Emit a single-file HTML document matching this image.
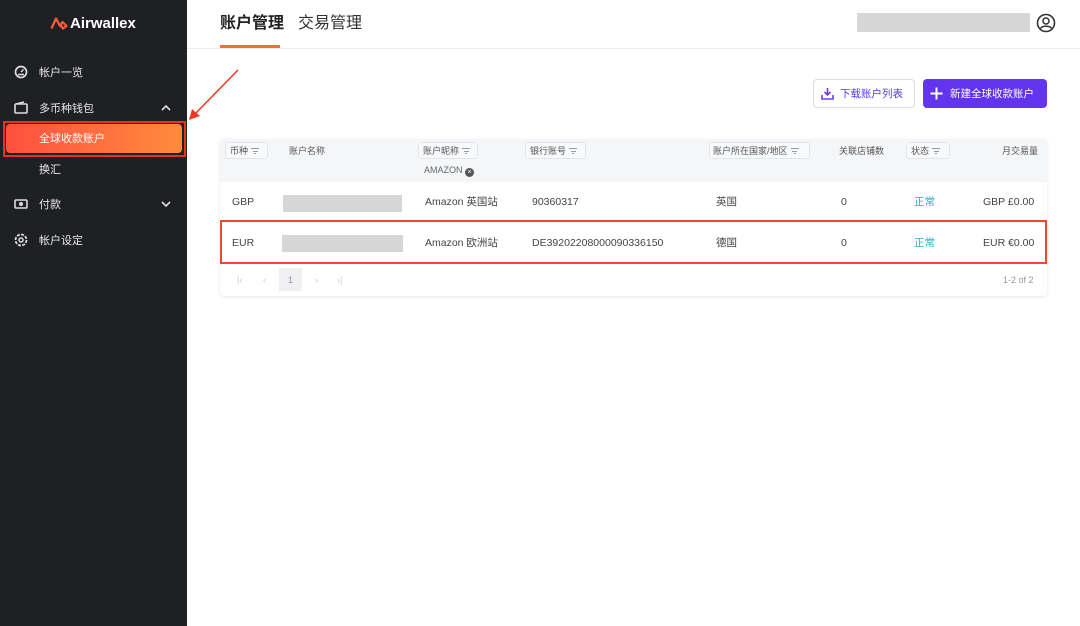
<!DOCTYPE html>
<html><head><meta charset="utf-8"><style>
*{margin:0;padding:0;box-sizing:border-box}
body{width:1080px;height:626px;overflow:hidden;background:#fff;font-family:"Liberation Sans","Noto Sans CJK SC",sans-serif;position:relative;color:#333}
.side{position:absolute;left:0;top:0;width:187px;height:626px;background:#1f2024;color:#ddd;font-size:11px}
.abs{position:absolute}
.nav{position:absolute;left:39px;font-size:11px;color:#e6e6e6;line-height:14px}
.ic{position:absolute;left:14px;width:14px;height:14px}
.th{position:absolute;top:145px;font-size:9px;color:#555;line-height:12px}
.chip{position:absolute;top:142px;height:17px;border:1px solid #e3e5ea;border-radius:3px;background:#f8f9fb}
.td{position:absolute;font-size:10.5px;color:#444;line-height:14px}
.grey{position:absolute;background:#d6d6d6;height:17px}
.f{display:inline-block;width:8px;height:6px;vertical-align:0;margin-left:3px;background:linear-gradient(#999,#999) 0 0/8px 1px no-repeat,linear-gradient(#999,#999) 1.5px 2.5px/5px 1px no-repeat,linear-gradient(#999,#999) 3px 5px/2px 1px no-repeat}
</style></head><body>
<div class="side">
  <svg class="abs" style="left:50px;top:16px" width="19" height="14" viewBox="0 0 19 14"><path d="M1.5 12.5 L6 2.5 L10 10 L12.5 6 L16.5 10 L13 12.5 L10.5 9" fill="none" stroke="#ff5a3c" stroke-width="2.2" stroke-linejoin="round"/></svg>
  <div class="abs" style="left:70px;top:15px;font-size:15px;font-weight:bold;color:#fff;line-height:18px">Airwallex</div>
  <svg class="ic" style="top:65px" viewBox="0 0 14 14"><circle cx="7" cy="7" r="5.5" fill="none" stroke="#ddd" stroke-width="1.7"/><path d="M7 7 L9.5 4.5 M4 9.5 h6" stroke="#ddd" stroke-width="1.5"/></svg>
  <div class="nav" style="top:66px">帐户一览</div>
  <svg class="ic" style="top:101px" viewBox="0 0 14 14"><rect x="1" y="3" width="12" height="9" rx="1" fill="none" stroke="#ddd" stroke-width="1.6"/><path d="M2 3 L10 1" stroke="#ddd" stroke-width="1.5"/></svg>
  <div class="nav" style="top:102px">多币种钱包</div>
  <svg class="abs" style="left:161px;top:104px" width="10" height="8" viewBox="0 0 10 8"><path d="M1 6 L5 2 L9 6" fill="none" stroke="#ddd" stroke-width="1.6"/></svg>
  <div class="abs" style="left:3px;top:121px;width:183px;height:36px;border:2px solid #e8321e"></div>
  <div class="abs" style="left:6px;top:124px;width:176px;height:29px;border-radius:4px;background:linear-gradient(90deg,#ff5040,#ff8a3c)"></div>
  <div class="nav" style="top:132px;color:#fff">全球收款账户</div>
  <div class="nav" style="top:163px">换汇</div>
  <svg class="ic" style="top:197px" viewBox="0 0 14 14"><rect x="1" y="3" width="12" height="8" rx="1" fill="none" stroke="#ddd" stroke-width="1.6"/><circle cx="7" cy="7" r="2" fill="#ddd"/></svg>
  <div class="nav" style="top:198px">付款</div>
  <svg class="abs" style="left:161px;top:200px" width="10" height="8" viewBox="0 0 10 8"><path d="M1 2 L5 6 L9 2" fill="none" stroke="#ddd" stroke-width="1.6"/></svg>
  <svg class="ic" style="top:233px" viewBox="0 0 14 14"><circle cx="7" cy="7" r="5.5" fill="none" stroke="#ddd" stroke-width="1.8" stroke-dasharray="3 1.3"/><circle cx="7" cy="7" r="2" fill="none" stroke="#ddd" stroke-width="1.5"/></svg>
  <div class="nav" style="top:234px">帐户设定</div>
</div>
<svg class="abs" style="left:185px;top:66px" width="60" height="60" viewBox="0 0 60 60"><path d="M53 4 L8 50" stroke="#ee3a24" stroke-width="1.6"/><path d="M4 54 L7 43 L15 50 Z" fill="#ee3a24"/></svg>
<div class="abs" style="left:187px;top:48px;width:893px;height:1px;background:#ececec"></div>
<div class="abs" style="left:220px;top:13px;font-size:16px;font-weight:bold;color:#222;line-height:22px">账户管理</div>
<div class="abs" style="left:220px;top:45px;width:60px;height:3px;background:#ff6a3c"></div>
<div class="abs" style="left:298px;top:13px;font-size:16px;color:#333;line-height:22px">交易管理</div>
<div class="abs" style="left:857px;top:13px;width:173px;height:19px;background:#d6d6d6"></div>
<svg class="abs" style="left:1036px;top:13px" width="20" height="20" viewBox="0 0 20 20"><circle cx="10" cy="10" r="8.5" fill="none" stroke="#333" stroke-width="1.6"/><circle cx="10" cy="8" r="3" fill="none" stroke="#333" stroke-width="1.5"/><path d="M4.5 15.5 C6 12.5 14 12.5 15.5 15.5" fill="none" stroke="#333" stroke-width="1.5"/></svg>
<div class="abs" style="left:813px;top:79px;width:102px;height:29px;border:1px solid #dcdce2;border-radius:4px"></div>
<svg class="abs" style="left:821px;top:87px" width="13" height="13" viewBox="0 0 13 13"><path d="M6.5 1 V8 M3.5 5 L6.5 8 L9.5 5 M1 8 V12 H12 V8" fill="none" stroke="#6b3cf5" stroke-width="1.6"/></svg>
<div class="abs" style="left:840px;top:87px;font-size:10.5px;color:#5a3ae6;line-height:14px">下载账户列表</div>
<div class="abs" style="left:923px;top:79px;width:124px;height:29px;border-radius:4px;background:#6234f0"></div>
<svg class="abs" style="left:930px;top:87px" width="13" height="13" viewBox="0 0 13 13"><path d="M6.5 0.5 V12.5 M0.5 6.5 H12.5" stroke="#fff" stroke-width="2"/></svg>
<div class="abs" style="left:950px;top:87px;font-size:10.5px;color:#fff;line-height:14px">新建全球收款账户</div>
<div class="abs" style="left:220px;top:139px;width:827px;height:157px;border-radius:4px;box-shadow:0 1px 3px rgba(0,0,0,.1);background:#fff"></div>
<div class="abs" style="left:220px;top:139px;width:827px;height:43px;background:#f5f6f8;border-radius:4px 4px 0 0"></div>
<div class="chip" style="left:225px;width:43px"></div>
<div class="chip" style="left:418px;width:60px"></div>
<div class="chip" style="left:525px;width:61px"></div>
<div class="chip" style="left:709px;width:101px"></div>
<div class="chip" style="left:906px;width:44px"></div>
<div class="th" style="left:230px">币种<span class="f"></span></div>
<div class="th" style="left:289px">账户名称</div>
<div class="th" style="left:423px">账户昵称<span class="f"></span></div>
<div class="th" style="left:424px;top:164px;color:#666">AMAZON <span style="display:inline-block;width:9px;height:9px;border-radius:50%;background:#555;color:#fff;font-size:7px;text-align:center;line-height:9px;vertical-align:-1px">×</span></div>
<div class="th" style="left:530px">银行账号<span class="f"></span></div>
<div class="th" style="left:713px">账户所在国家/地区<span class="f"></span></div>
<div class="th" style="left:839px">关联店铺数</div>
<div class="th" style="left:911px">状态<span class="f"></span></div>
<div class="th" style="left:1002px">月交易量</div>
<div class="abs" style="left:220px;top:222px;width:827px;height:1px;background:#eee"></div>
<div class="td" style="left:232px;top:195px">GBP</div>
<div class="grey" style="left:283px;top:195px;width:119px"></div>
<div class="td" style="left:425px;top:195px">Amazon 英国站</div>
<div class="td" style="left:532px;top:195px">90360317</div>
<div class="td" style="left:716px;top:195px">英国</div>
<div class="td" style="left:841px;top:195px">0</div>
<div class="td" style="left:914px;top:195px;color:#2ab0c5">正常</div>
<div class="td" style="left:983px;top:195px">GBP £0.00</div>
<div class="abs" style="left:220px;top:220px;width:827px;height:44px;border:2px solid #ee4a30"></div>
<div class="td" style="left:232px;top:236px">EUR</div>
<div class="grey" style="left:282px;top:235px;width:121px"></div>
<div class="td" style="left:425px;top:236px">Amazon 欧洲站</div>
<div class="td" style="left:532px;top:236px">DE39202208000090336150</div>
<div class="td" style="left:716px;top:236px">德国</div>
<div class="td" style="left:841px;top:236px">0</div>
<div class="td" style="left:914px;top:236px;color:#2ab0c5">正常</div>
<div class="td" style="left:983px;top:236px">EUR €0.00</div>
<div class="td" style="left:237px;top:273px;color:#ccc;font-size:9px">|‹</div>
<div class="td" style="left:263px;top:273px;color:#ccc;font-size:9px">‹</div>
<div class="abs" style="left:279px;top:268px;width:23px;height:23px;background:#f0f0f2"></div>
<div class="td" style="left:288px;top:273px;color:#999;font-size:9px">1</div>
<div class="td" style="left:315px;top:273px;color:#ccc;font-size:9px">›</div>
<div class="td" style="left:337px;top:273px;color:#ccc;font-size:9px">›|</div>
<div class="td" style="left:1003px;top:273px;color:#999;font-size:9px">1-2 of 2</div>
</body></html>
